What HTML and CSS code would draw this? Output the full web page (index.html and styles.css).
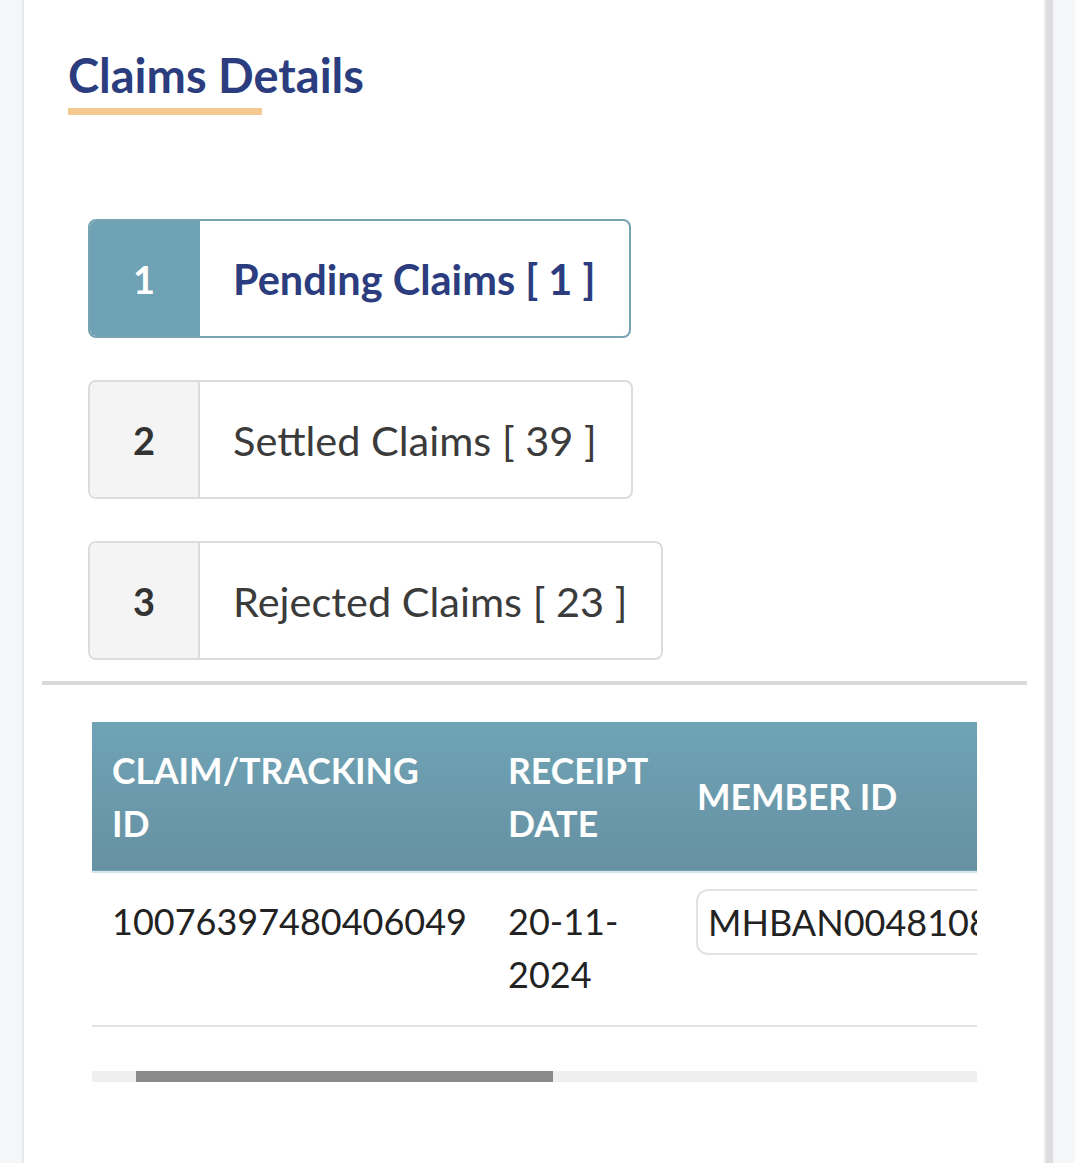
FILE: index.html
```html
<!DOCTYPE html>
<html lang="en">
<head>
<meta charset="utf-8">
<title>Claims Details</title>
<link rel="stylesheet" href="styles.css">
</head>
<body>
<div class="page">
  <div class="gutter-left"></div>
  <main class="card">
    <header class="section-head">
      <h1 class="section-title">Claims Details</h1>
      <div class="section-underline"></div>
    </header>

    <ul class="tabs">
      <li class="tab tab-active">
        <span class="tab-num">1</span>
        <span class="tab-label">Pending Claims [ 1 ]</span>
      </li>
      <li class="tab">
        <span class="tab-num">2</span>
        <span class="tab-label">Settled Claims [ 39 ]</span>
      </li>
      <li class="tab">
        <span class="tab-num">3</span>
        <span class="tab-label">Rejected Claims [ 23 ]</span>
      </li>
    </ul>

    <div class="divider"></div>

    <div class="table-wrap">
      <div class="table-scroll">
        <table class="claims-table">
          <thead>
            <tr>
              <th class="col-id">CLAIM/TRACKING<br>ID</th>
              <th class="col-date">RECEIPT<br>DATE</th>
              <th class="col-member">MEMBER ID</th>
            </tr>
          </thead>
          <tbody>
            <tr>
              <td class="col-id">10076397480406049</td>
              <td class="col-date">20-11-<br>2024</td>
              <td class="col-member"><span class="member-box">MHBAN00481089</span></td>
            </tr>
          </tbody>
        </table>
      </div>
      <div class="hscroll"><div class="hscroll-thumb"></div></div>
    </div>
  </main>
  <div class="gutter-right"></div>
  <div class="edge-right"></div>
</div>
</body>
</html>
```

FILE: styles.css
```css
* { box-sizing: border-box; }

html, body {
  margin: 0;
  padding: 0;
  background: #f5f6fa;
  font-family: Lato, "Liberation Sans", Arial, sans-serif;
}

.page {
  display: flex;
  min-height: 1163px;
}

.gutter-left {
  width: 22px;
  flex: none;
  background: #f5f6fa;
}

.card {
  width: 1031px;
  flex: none;
  background: #ffffff;
  border-left: 2px solid #e8e9ed;
  border-right: 7px solid #dddddf;
  box-shadow: inset -2px 0 0 #ebebeb;
  padding-top: 47px;
}

.gutter-right {
  flex: 1;
  background: #f5f6fa;
}

.edge-right {
  width: 5px;
  flex: none;
  background: #ffffff;
}

/* ---------- title ---------- */
.section-head {
  padding-left: 44px;
}

.section-title {
  margin: 0;
  font-size: 47px;
  line-height: 56px;
  font-weight: 700;
  color: #2b3d7e;
}

.section-underline {
  width: 194px;
  height: 7px;
  margin-top: 5px;
  background: #f4c88f;
}

/* ---------- tabs ---------- */
.tabs {
  list-style: none;
  margin: 104px 0 0 0;
  padding: 0 0 0 64px;
  display: flex;
  flex-direction: column;
  align-items: flex-start;
  gap: 42px;
}

.tab {
  display: inline-flex;
  height: 119px;
  border: 2px solid #dcdcdc;
  border-radius: 8px;
  overflow: hidden;
  background: #ffffff;
}

.tab-num {
  width: 110px;
  display: flex;
  align-items: center;
  justify-content: center;
  background: #f4f4f4;
  border-right: 2px solid #dcdcdc;
  font-size: 38px;
  font-weight: 700;
  color: #333333;
}

.tab-label {
  display: flex;
  align-items: center;
  padding: 0 34px 0 33px;
  font-size: 41.5px;
  color: #3b3b3b;
}

.tab-active {
  border-color: #78a3b3;
}

.tab-active .tab-num {
  background: #6fa2b5;
  border-right-color: #6fa2b5;
  color: #ffffff;
}

.tab-active .tab-label {
  color: #2b3d7e;
  font-weight: 700;
}

/* ---------- divider ---------- */
.divider {
  height: 4px;
  margin: 21px 19px 0 18px;
  background: #d9d9d9;
}

/* ---------- table ---------- */
.table-wrap {
  width: 885px;
  margin: 37px 0 0 68px;
}

.table-scroll {
  overflow: hidden;
}

.claims-table {
  border-collapse: collapse;
  width: 1100px;
  table-layout: fixed;
}

.claims-table th,
.claims-table td {
  text-align: left;
  padding: 0 0 0 20px;
}

.col-id { width: 396px; }
.col-date { width: 189px; }

.claims-table thead tr {
  height: 150px;
  background: linear-gradient(180deg, #6fa3b6 0%, #6691a2 100%);
  border-bottom: 2px solid #d6e5eb;
}

.claims-table th {
  color: #ffffff;
  font-size: 35.5px;
  line-height: 53px;
  font-weight: 700;
  vertical-align: middle;
}

.claims-table tbody tr {
  height: 154px;
  border-bottom: 2px solid #e4e4e4;
}

.claims-table td {
  vertical-align: top;
  padding-top: 22px;
  font-size: 36px;
  line-height: 53px;
  color: #222222;
}

.claims-table td.col-member {
  padding-top: 16px;
  padding-left: 19px;
}

.member-box {
  display: block;
  height: 66px;
  padding: 5px 10px;
  border: 2px solid #e2e2e2;
  border-radius: 12px;
  white-space: nowrap;
}

/* ---------- horizontal scrollbar ---------- */
.hscroll {
  margin-top: 44px;
  height: 11px;
  background: #efefef;
}

.hscroll-thumb {
  margin-left: 44px;
  width: 417px;
  height: 11px;
  background: #8a8a8a;
}
```
